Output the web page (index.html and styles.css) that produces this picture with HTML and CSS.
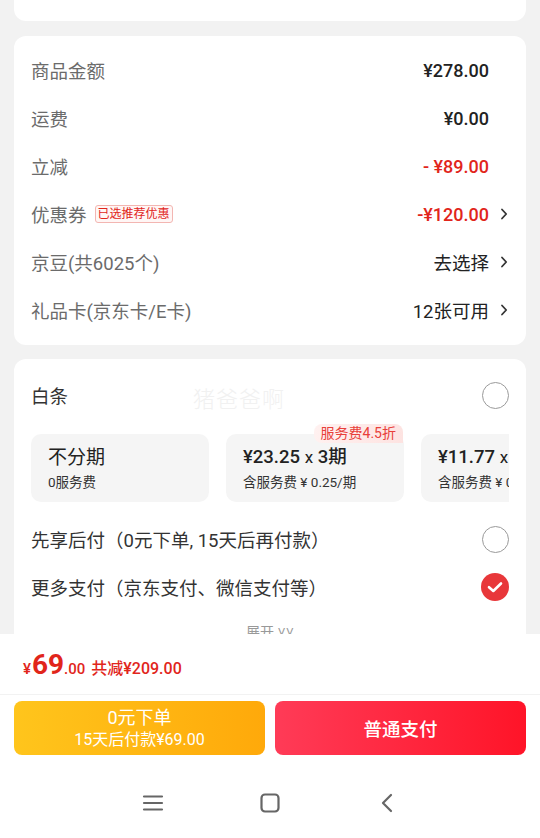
FILE: index.html
```html
<!DOCTYPE html>
<html lang="zh-CN">
<head>
<meta charset="utf-8">
<link rel="stylesheet" href="styles.css">
</head>
<body>
<div class="screen">
  <div class="content">
    <div class="card card-top"></div>

    <div class="card price-card">
      <div class="row"><span class="label">商品金额</span><span class="value">¥278.00</span></div>
      <div class="row"><span class="label">运费</span><span class="value">¥0.00</span></div>
      <div class="row"><span class="label">立减</span><span class="value red">- ¥89.00</span></div>
      <div class="row">
        <span class="label">优惠券 <span class="tag">已选推荐优惠</span></span>
        <span class="value red">-¥120.00<svg class="chev" viewBox="0 0 8 12" width="8" height="12"><path d="M2 1.5 L6.2 6 L2 10.5" fill="none" stroke="#333" stroke-width="1.8" stroke-linecap="round" stroke-linejoin="round"/></svg></span>
      </div>
      <div class="row">
        <span class="label">京豆(共6025个)</span>
        <span class="value normal">去选择<svg class="chev" viewBox="0 0 8 12" width="8" height="12"><path d="M2 1.5 L6.2 6 L2 10.5" fill="none" stroke="#333" stroke-width="1.8" stroke-linecap="round" stroke-linejoin="round"/></svg></span>
      </div>
      <div class="row">
        <span class="label">礼品卡(京东卡/E卡)</span>
        <span class="value normal">12张可用<svg class="chev" viewBox="0 0 8 12" width="8" height="12"><path d="M2 1.5 L6.2 6 L2 10.5" fill="none" stroke="#333" stroke-width="1.8" stroke-linecap="round" stroke-linejoin="round"/></svg></span>
      </div>
    </div>

    <div class="card pay-card">
      <div class="row pay-row">
        <span class="title">白条</span>
        <span class="watermark">猪爸爸啊</span>
        <span class="radio"></span>
      </div>
      <div class="plans">
        <div class="plan">
          <div class="plan-main">不分期</div>
          <div class="plan-sub">0服务费</div>
        </div>
        <div class="plan">
          <span class="plan-tag">服务费4.5折</span>
          <div class="plan-main num">¥23.25 <span class="x">x</span> 3期</div>
          <div class="plan-sub">含服务费 ¥ 0.25/期</div>
        </div>
        <div class="plan">
          <div class="plan-main num">¥11.77 <span class="x">x</span> 6期</div>
          <div class="plan-sub">含服务费 ¥ 0.12/期</div>
        </div>
      </div>
      <div class="row pay-row opt">
        <span class="title">先享后付（0元下单, 15天后再付款）</span>
        <span class="radio"></span>
      </div>
      <div class="row pay-row opt2">
        <span class="title">更多支付（京东支付、微信支付等）</span>
        <svg class="check" viewBox="0 0 28 28" width="28" height="28"><circle cx="14" cy="14" r="14" fill="#e8373a"/><path d="M8 14.2 L12.3 18 L20 10.5" fill="none" stroke="#fff" stroke-width="2.6" stroke-linecap="round" stroke-linejoin="round"/></svg>
      </div>
      <div class="expand">展开 ˅˅</div>
    </div>
  </div>

  <div class="footer">
    <div class="total">
      <span class="yen">¥</span><span class="big">69</span><span class="dec">.00</span><span class="save">共减¥209.00</span>
    </div>
    <div class="buttons">
      <div class="btn btn-yellow">
        <div class="btn-main">0元下单</div>
        <div class="btn-sub">15天后付款¥69.00</div>
      </div>
      <div class="btn btn-red">
        <div class="btn-big">普通支付</div>
      </div>
    </div>
    <div class="navbar">
      <span class="nav-ico"><svg viewBox="0 0 22 18" width="22" height="18"><path d="M2 2.5 H20 M2 9 H20 M2 15.5 H20" stroke="#666" stroke-width="2.2" stroke-linecap="round"/></svg></span>
      <span class="nav-ico"><svg viewBox="0 0 22 22" width="22" height="22"><rect x="2.5" y="2.5" width="17" height="17" rx="3.5" fill="none" stroke="#666" stroke-width="2.2"/></svg></span>
      <span class="nav-ico"><svg viewBox="0 0 14 22" width="14" height="22"><path d="M11 3 L3 11 L11 19" fill="none" stroke="#666" stroke-width="2.2" stroke-linecap="round" stroke-linejoin="round"/></svg></span>
    </div>
  </div>
</div>
</body>
</html>
```

FILE: styles.css
```css
* { box-sizing: border-box; }
html, body { margin: 0; padding: 0; }
body {
  width: 540px;
  height: 838px;
  background: #f2f2f2;
  font-family: "Roboto", "Noto Sans CJK SC", sans-serif;
  color: #222;
  overflow: hidden;
}
.screen {
  display: flex;
  flex-direction: column;
  height: 838px;
}
.content {
  flex: 1;
  overflow: hidden;
  padding: 0 14px;
}
.card {
  background: #fff;
  border-radius: 12px;
  margin-bottom: 14px;
}
.card-top {
  height: 21px;
  border-radius: 0 0 12px 12px;
  margin-bottom: 15px;
}
.price-card {
  padding: 10px 0 11px;
}
.row {
  height: 48px;
  display: flex;
  align-items: center;
  justify-content: space-between;
  padding: 0 37px 0 17px;
}
.label {
  font-size: 18.5px;
  color: #6b6b6b;
  display: flex;
  align-items: center;
}
.tag {
  margin-left: 8px;
  font-size: 12px;
  color: #e1251b;
  border: 1px solid #f3b6b2;
  background: #fff6f5;
  border-radius: 3px;
  padding: 0 2px;
  line-height: 16px;
}
.value {
  font-size: 18px;
  font-weight: 500;
  color: #222;
  display: flex;
  align-items: center;
  position: relative;
}
.value.normal { font-weight: 400; font-size: 18.5px; }
.value.red { color: #e1251b; }
.chev {
  position: absolute;
  right: -19px;
  top: 50%;
  margin-top: -6px;
}
.pay-card {
  padding-top: 12px;
  height: 400px;
}
.pay-row { padding: 0 17px; position: relative; }
.title { font-size: 18.5px; color: #333; }
.watermark {
  position: absolute;
  left: 179px;
  top: 10px;
  font-size: 22px;
  font-weight: 300;
  color: #f1f1f1;
  letter-spacing: 1px;
}
.radio {
  width: 27px;
  height: 27px;
  border-radius: 50%;
  border: 1.5px solid #9a9a9a;
}
.plans {
  display: flex;
  gap: 17px;
  margin: 15px 17px 13px;
  clip-path: inset(-20px 0 0 0);
}
.plan {
  position: relative;
  flex: 0 0 178px;
  height: 68px;
  background: #f5f5f5;
  border-radius: 10px;
  padding: 10px 0 0 17px;
}
.plan-main {
  font-size: 19px;
  color: #222;
  line-height: 27px;
}
.plan-main.num { font-weight: 500; font-size: 18.5px; }
.plan-main .x { font-weight: 400; font-size: 17px; }
.plan-sub {
  font-size: 13.5px;
  color: #333;
  line-height: 20px;
  margin-top: 1px;
}
.plan-tag {
  position: absolute;
  right: 1px;
  top: -10px;
  font-size: 14px;
  color: #e8403a;
  background: linear-gradient(90deg, #fff1f0, #fde3e1);
  border-radius: 8px 8px 0 8px;
  padding: 0 7px;
  line-height: 19px;
}
.expand {
  text-align: center;
  font-size: 14px;
  color: #999;
  margin-top: 10px;
}
.footer {
  background: #fff;
  height: 204px;
  flex: 0 0 204px;
}
.total {
  height: 61px;
  display: flex;
  align-items: baseline;
  padding: 14px 0 0 23px;
  color: #e1251b;
  border-bottom: 1px solid #f2f2f2;
}
.yen { font-size: 15px; font-weight: 500; }
.big { font-size: 28px; font-weight: 700; margin-left: 1px; }
.dec { font-size: 15px; font-weight: 500; }
.save { font-size: 16px; font-weight: 500; margin-left: 6px; }
.buttons {
  display: flex;
  gap: 10px;
  padding: 6px 14px 0;
}
.btn {
  flex: 1;
  height: 54px;
  border-radius: 8px;
  color: #fff;
  display: flex;
  flex-direction: column;
  align-items: center;
  justify-content: center;
}
.btn-yellow { background: linear-gradient(90deg, #ffc51c, #ffa90a); }
.btn-red { background: linear-gradient(90deg, #ff3b57, #ff1428); }
.btn-main { font-size: 18px; line-height: 23px; }
.btn-sub { font-size: 16px; line-height: 21px; }
.btn-big { font-size: 18.5px; font-weight: 500; }
.navbar {
  display: flex;
  justify-content: center;
  align-items: center;
  gap: 77px;
  height: 94px;
  padding-top: 2px;
}
.nav-ico {
  width: 40px;
  display: flex;
  justify-content: center;
}
```
